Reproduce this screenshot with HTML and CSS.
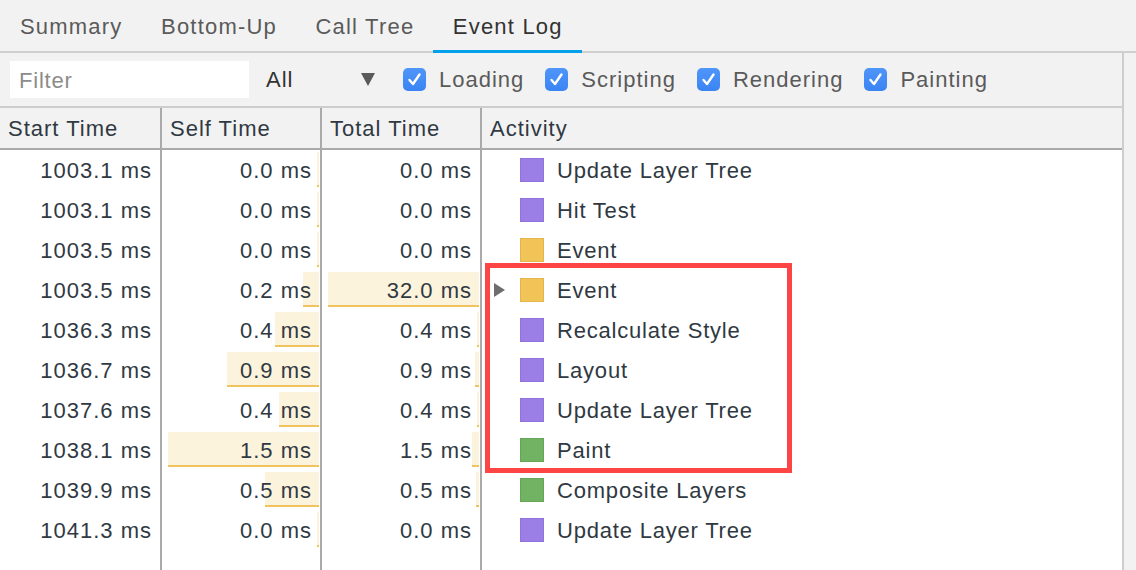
FILE: index.html
```html
<!DOCTYPE html>
<html>
<head>
<meta charset="utf-8">
<link rel="stylesheet" href="styles.css">
</head>
<body>
<div class="tabs">
  <div class="tab">Summary</div>
  <div class="tab">Bottom-Up</div>
  <div class="tab">Call Tree</div>
  <div class="tab active">Event Log</div>
  <div class="tab-fill"></div>
</div>
<div class="body">
  <div class="main">
    <div class="toolbar">
      <div class="filter">Filter</div>
      <div class="select"><span>All</span><span class="arrow"></span></div>
      <label class="check"><span class="box"><svg viewBox="0 0 23 23" width="23" height="23"><path d="M6.5 12 L10 16 L16.5 6.5" fill="none" stroke="#fff" stroke-width="2.4" stroke-linecap="round" stroke-linejoin="round"/></svg></span><span class="lbl">Loading</span></label>
      <label class="check"><span class="box"><svg viewBox="0 0 23 23" width="23" height="23"><path d="M6.5 12 L10 16 L16.5 6.5" fill="none" stroke="#fff" stroke-width="2.4" stroke-linecap="round" stroke-linejoin="round"/></svg></span><span class="lbl">Scripting</span></label>
      <label class="check"><span class="box"><svg viewBox="0 0 23 23" width="23" height="23"><path d="M6.5 12 L10 16 L16.5 6.5" fill="none" stroke="#fff" stroke-width="2.4" stroke-linecap="round" stroke-linejoin="round"/></svg></span><span class="lbl">Rendering</span></label>
      <label class="check"><span class="box"><svg viewBox="0 0 23 23" width="23" height="23"><path d="M6.5 12 L10 16 L16.5 6.5" fill="none" stroke="#fff" stroke-width="2.4" stroke-linecap="round" stroke-linejoin="round"/></svg></span><span class="lbl">Painting</span></label>
    </div>
    <div class="table">
      <div class="th">Start Time</div>
      <div class="th">Self Time</div>
      <div class="th">Total Time</div>
      <div class="th last">Activity</div>

      <div class="td num">1003.1 ms</div>
      <div class="td num"><span class="bar" style="width:2px"></span><span class="v">0.0 ms</span></div>
      <div class="td num"><span class="v">0.0 ms</span></div>
      <div class="td act"><span class="tri"></span><span class="sq purple"></span><span class="name">Update Layer Tree</span></div>

      <div class="td num">1003.1 ms</div>
      <div class="td num"><span class="bar" style="width:2px"></span><span class="v">0.0 ms</span></div>
      <div class="td num"><span class="v">0.0 ms</span></div>
      <div class="td act"><span class="tri"></span><span class="sq purple"></span><span class="name">Hit Test</span></div>

      <div class="td num">1003.5 ms</div>
      <div class="td num"><span class="bar" style="width:2px"></span><span class="v">0.0 ms</span></div>
      <div class="td num"><span class="v">0.0 ms</span></div>
      <div class="td act"><span class="tri"></span><span class="sq yellow"></span><span class="name">Event</span></div>

      <div class="td num">1003.5 ms</div>
      <div class="td num"><span class="bar" style="width:16px"></span><span class="v">0.2 ms</span></div>
      <div class="td num"><span class="bar" style="width:151px"></span><span class="v">32.0 ms</span></div>
      <div class="td act"><span class="tri on"></span><span class="sq yellow"></span><span class="name">Event</span></div>

      <div class="td num">1036.3 ms</div>
      <div class="td num"><span class="bar" style="width:44px"></span><span class="v">0.4 ms</span></div>
      <div class="td num"><span class="bar" style="width:2px"></span><span class="v">0.4 ms</span></div>
      <div class="td act"><span class="tri"></span><span class="sq purple"></span><span class="name">Recalculate Style</span></div>

      <div class="td num">1036.7 ms</div>
      <div class="td num"><span class="bar" style="width:92px"></span><span class="v">0.9 ms</span></div>
      <div class="td num"><span class="bar" style="width:4px"></span><span class="v">0.9 ms</span></div>
      <div class="td act"><span class="tri"></span><span class="sq purple"></span><span class="name">Layout</span></div>

      <div class="td num">1037.6 ms</div>
      <div class="td num"><span class="bar" style="width:40px"></span><span class="v">0.4 ms</span></div>
      <div class="td num"><span class="bar" style="width:2px"></span><span class="v">0.4 ms</span></div>
      <div class="td act"><span class="tri"></span><span class="sq purple"></span><span class="name">Update Layer Tree</span></div>

      <div class="td num">1038.1 ms</div>
      <div class="td num"><span class="bar" style="width:151px"></span><span class="v">1.5 ms</span></div>
      <div class="td num"><span class="bar" style="width:7px"></span><span class="v">1.5 ms</span></div>
      <div class="td act"><span class="tri"></span><span class="sq green"></span><span class="name">Paint</span></div>

      <div class="td num">1039.9 ms</div>
      <div class="td num"><span class="bar" style="width:54px"></span><span class="v">0.5 ms</span></div>
      <div class="td num"><span class="bar" style="width:3px"></span><span class="v">0.5 ms</span></div>
      <div class="td act"><span class="tri"></span><span class="sq green"></span><span class="name">Composite Layers</span></div>

      <div class="td num">1041.3 ms</div>
      <div class="td num"><span class="bar" style="width:2px"></span><span class="v">0.0 ms</span></div>
      <div class="td num"><span class="v">0.0 ms</span></div>
      <div class="td act"><span class="tri"></span><span class="sq purple"></span><span class="name">Update Layer Tree</span></div>

      <div class="td fill"></div>
      <div class="td fill"></div>
      <div class="td fill"></div>
      <div class="td fill last"></div>

      <div class="highlight"></div>
    </div>
  </div>
  <div class="side"></div>
</div>
</body>
</html>
```

FILE: styles.css
```css
* { box-sizing: border-box; }

html, body {
  margin: 0;
  padding: 0;
}

body {
  width: 1136px;
  height: 570px;
  overflow: hidden;
  background: #ffffff;
  font-family: "Liberation Sans", Arial, sans-serif;
  font-size: 22px;
  letter-spacing: 1px;
  color: #303942;
  display: flex;
  flex-direction: column;
}

.tabs {
  display: flex;
  height: 53px;
  background: #f2f2f2;
  flex: none;
  letter-spacing: 1.2px;
}

.tab {
  display: flex;
  align-items: center;
  padding: 2px 19px 0 19.5px;
  color: #5a5a5a;
  border-bottom: 2px solid #cfcfcf;
}

.tab:first-child {
  padding-left: 20px;
}

.tab.active {
  color: #333333;
  border-bottom: 3px solid #03a0ea;
  padding-top: 3px;
}

.tab-fill {
  flex: 1;
  border-bottom: 2px solid #cfcfcf;
}

.body {
  flex: 1;
  display: flex;
  min-height: 0;
}

.main {
  width: 1124px;
  border-right: 2px solid #cdcdcd;
  display: flex;
  flex-direction: column;
}

.side {
  flex: 1;
  background: #f2f2f2;
}

.toolbar {
  height: 55px;
  background: #f2f2f2;
  border-bottom: 2px solid #cdcdcd;
  display: flex;
  align-items: center;
  padding-left: 10px;
  padding-bottom: 1px;
  flex: none;
  letter-spacing: 1px;
}

.filter {
  width: 239px;
  height: 37px;
  background: #ffffff;
  color: #8c8c8c;
  display: flex;
  align-items: center;
  padding-left: 9px;
  padding-top: 2px;
  margin-top: 1px;
  letter-spacing: 0.8px;
}

.select {
  display: flex;
  align-items: center;
  width: 154px;
  padding-left: 17px;
  padding-top: 2px;
  color: #333333;
}

.select .arrow {
  margin-left: 68px;
  width: 0;
  height: 0;
  border-left: 7px solid transparent;
  border-right: 7px solid transparent;
  border-top: 13px solid #5a5a5a;
  margin-top: -1px;
}

.check {
  display: flex;
  align-items: center;
  color: #5a5a5a;
  margin-right: 21px;
}

.check .box {
  width: 23px;
  height: 23px;
  border-radius: 5px;
  background: linear-gradient(#4f96fa, #3a84f4);
  margin-right: 13px;
  display: block;
}

.check .box svg {
  display: block;
}

.check .lbl {
  padding-top: 2px;
}

.table {
  flex: 1;
  position: relative;
  display: grid;
  grid-template-columns: 162px 160px 160px 1fr;
  grid-template-rows: 42px repeat(10, 40px) 1fr;
}

.th {
  background: #f2f2f2;
  border-bottom: 2px solid #aaaaaa;
  border-right: 2px solid #aaaaaa;
  display: flex;
  align-items: center;
  padding-left: 8px;
  padding-top: 2px;
  color: #303942;
}

.th.last,
.td.act,
.td.fill.last {
  border-right: none;
}

.td {
  position: relative;
  border-right: 2px solid #aaaaaa;
  display: flex;
  align-items: center;
  white-space: nowrap;
  padding-top: 2px;
}

.td.num {
  justify-content: flex-end;
  padding-right: 8px;
}

.td .v {
  position: relative;
}

.bar {
  position: absolute;
  right: 1px;
  top: 2px;
  height: 35px;
  background: #fcf3dd;
  border-bottom: 2px solid #f0c35c;
}

.td.act {
  padding-left: 12px;
  padding-top: 0;
  letter-spacing: 0.8px;
}

.td.act .name {
  padding-top: 2px;
}

.tri {
  width: 11px;
  height: 14px;
  margin-right: 15px;
  flex: none;
}

.tri.on {
  border-top: 7px solid transparent;
  border-bottom: 7px solid transparent;
  border-left: 11px solid #6e6e6e;
  height: 0;
}

.sq {
  width: 24px;
  height: 24px;
  margin-right: 13px;
  flex: none;
  border: 1px solid;
}

.sq.purple {
  background: #9b7fe6;
  border-color: #8f72dc;
}

.sq.yellow {
  background: #f0c457;
  border-color: #e3b54a;
}

.sq.green {
  background: #71b363;
  border-color: #64a656;
}

.highlight {
  position: absolute;
  left: 485px;
  top: 155px;
  width: 307px;
  height: 210px;
  border: 5px solid #fd4545;
  pointer-events: none;
}
```
